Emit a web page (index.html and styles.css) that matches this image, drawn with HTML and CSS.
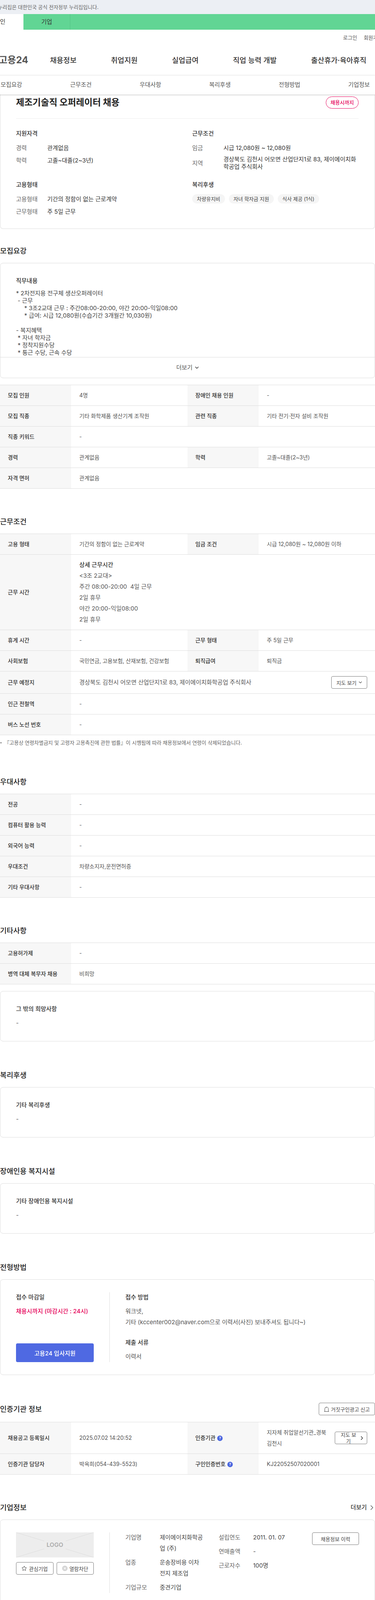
FILE: index.html
```html
<!DOCTYPE html>
<html lang="ko">
<head>
  <meta charset="UTF-8" />
  <title>제조기술직 오퍼레이터 채용 - 고용24</title>
  <link rel="stylesheet" href="styles.css">
</head>
<body>
  <div class="gov-bar">이 누리집은 대한민국 공식 전자정부 누리집입니다.</div>

  <div class="user-bar">
    <a class="user-tab active">개인</a>
    <a class="user-tab">기업</a>
  </div>

  <div class="util">
    <a>로그인</a>
    <a>회원가입</a>
  </div>

  <nav class="gnb">
    <div class="logo">고용24</div>
    <a>채용정보</a>
    <a>취업지원</a>
    <a>실업급여</a>
    <a>직업 능력 개발</a>
    <a>출산휴가·육아휴직</a>
  </nav>

  <div class="tabs">
    <a>모집요강</a>
    <a>근무조건</a>
    <a>우대사항</a>
    <a>복리후생</a>
    <a>전형방법</a>
    <a>기업정보</a>
  </div>

  <section class="card summary">
    <div class="summary-head">
      <h1>제조기술직 오퍼레이터 채용</h1>
      <span class="pill">채용시까지</span>
    </div>
    <div class="summary-grid">
      <div class="summary-col">
        <h3>지원자격</h3>
        <dl class="summary-row"><dt>경력</dt><dd>관계없음</dd></dl>
        <dl class="summary-row"><dt>학력</dt><dd>고졸~대졸(2~3년)</dd></dl>
      </div>
      <div class="summary-col">
        <h3>근무조건</h3>
        <dl class="summary-row"><dt>임금</dt><dd>시급 12,080원 ~ 12,080원</dd></dl>
        <dl class="summary-row multi"><dt>지역</dt><dd>경상북도 김천시 어모면 산업단지1로 83, 제이에이치화학공업 주식회사</dd></dl>
      </div>
      <div class="summary-col">
        <h3>고용형태</h3>
        <dl class="summary-row"><dt>고용형태</dt><dd>기간의 정함이 없는 근로계약</dd></dl>
        <dl class="summary-row"><dt>근무형태</dt><dd>주 5일 근무</dd></dl>
      </div>
      <div class="summary-col">
        <h3>복리후생</h3>
        <div class="chips">
          <span>차량유지비</span>
          <span>자녀 학자금 지원</span>
          <span>식사 제공 (1식)</span>
        </div>
      </div>
    </div>
  </section>

  <section class="section first">
    <h2>모집요강</h2>
    <div class="card job-card">
      <div class="job-body">
        <h4>직무내용</h4>
        <pre class="job-text">* 2차전지용 전구체 생산오퍼레이터
 - 근무
     * 3조2교대 근무 : 주간08:00-20:00, 야간 20:00-익일08:00
     * 급여: 시급 12,080원(수습기간 3개월간 10,030원)

- 복지혜택
 * 자녀 학자금
 * 정착지원수당
 * 통근 수당, 근속 수당</pre>
      </div>
      <div class="more">
        더보기
        <svg width="10" height="7" viewBox="0 0 10 7"><path d="M1 1l4 4 4-4" fill="none" stroke="#333" stroke-width="1.5"/></svg>
      </div>
    </div>

    <table class="info-table after-card">
      <colgroup><col class="c-th"><col class="c-td"><col class="c-th"><col class="c-td"></colgroup>
      <tr><th>모집 인원</th><td>4명</td><th>장애인 채용 인원</th><td>-</td></tr>
      <tr><th>모집 직종</th><td>기타 화학제품 생산기계 조작원</td><th>관련 직종</th><td>기타 전기·전자 설비 조작원</td></tr>
      <tr><th>직종 키워드</th><td colspan="3">-</td></tr>
      <tr><th>경력</th><td>관계없음</td><th>학력</th><td>고졸~대졸(2~3년)</td></tr>
      <tr><th>자격 면허</th><td colspan="3">관계없음</td></tr>
    </table>
  </section>

  <section class="section after-table">
    <h2>근무조건</h2>
    <table class="info-table">
      <colgroup><col class="c-th"><col class="c-td"><col class="c-th"><col class="c-td"></colgroup>
      <tr><th>고용 형태</th><td>기간의 정함이 없는 근로계약</td><th>임금 조건</th><td>시급 12,080원 ~ 12,080원 이하</td></tr>
      <tr>
        <th>근무 시간</th>
        <td colspan="3" class="hours">
          <strong class="hours-title">상세 근무시간</strong><br>
          &lt;3조 2교대&gt;<br>
          주간 08:00-20:00&nbsp; 4일 근무<br>
          2일 휴무<br>
          야간 20:00-익일08:00<br>
          2일 휴무
        </td>
      </tr>
      <tr><th>휴게 시간</th><td>-</td><th>근무 형태</th><td>주 5일 근무</td></tr>
      <tr><th>사회보험</th><td>국민연금, 고용보험, 산재보험, 건강보험</td><th>퇴직급여</th><td>퇴직금</td></tr>
      <tr>
        <th>근무 예정지</th>
        <td colspan="3">
          <div class="place">
            <span class="place-text">경상북도 김천시 어모면 산업단지1로 83, 제이에이치화학공업 주식회사</span>
            <button class="btn map-btn">지도 보기
              <svg width="9" height="6" viewBox="0 0 9 6"><path d="M1 1l3.5 3.5L8 1" fill="none" stroke="#444" stroke-width="1.1"/></svg>
            </button>
          </div>
        </td>
      </tr>
      <tr><th>인근 전철역</th><td colspan="3">-</td></tr>
      <tr><th>버스 노선 번호</th><td colspan="3">-</td></tr>
    </table>
    <p class="note">『고용상 연령차별금지 및 고령자 고용촉진에 관한 법률』이 시행됨에 따라 채용정보에서 연령이 삭제되었습니다.</p>
  </section>

  <section class="section">
    <h2>우대사항</h2>
    <table class="info-table">
      <colgroup><col class="c-th"><col class="c-td"><col class="c-th"><col class="c-td"></colgroup>
      <tr><th>전공</th><td colspan="3">-</td></tr>
      <tr><th>컴퓨터 활용 능력</th><td colspan="3">-</td></tr>
      <tr><th>외국어 능력</th><td colspan="3">-</td></tr>
      <tr><th>우대조건</th><td colspan="3">차량소지자,운전면허증</td></tr>
      <tr><th>기타 우대사항</th><td colspan="3">-</td></tr>
    </table>
  </section>

  <section class="section after-table">
    <h2>기타사항</h2>
    <table class="info-table">
      <colgroup><col class="c-th"><col class="c-td"><col class="c-th"><col class="c-td"></colgroup>
      <tr><th>고용허가제</th><td colspan="3">-</td></tr>
      <tr><th>병역 대체 복무자 채용</th><td colspan="3">비희망</td></tr>
    </table>
    <div class="card simple-card after-card">
      <h4>그 밖의 희망사항</h4>
      <p>-</p>
    </div>
  </section>

  <section class="section">
    <h2>복리후생</h2>
    <div class="card simple-card">
      <h4>기타 복리후생</h4>
      <p>-</p>
    </div>
  </section>

  <section class="section">
    <h2>장애인용 복지시설</h2>
    <div class="card simple-card">
      <h4>기타 장애인용 복지시설</h4>
      <p>-</p>
    </div>
  </section>

  <section class="section">
    <h2>전형방법</h2>
    <div class="card split-card">
      <div class="split-left">
        <h4>접수 마감일</h4>
        <p class="deadline">채용시까지 (마감시간 : 24시)</p>
        <button class="apply-btn">고용24 입사지원</button>
      </div>
      <div class="split-right">
        <h4>접수 방법</h4>
        <p>워크넷,<br>기타 (kccenter002@naver.com으로 이력서(사진) 보내주셔도 됩니다~)</p>
        <h4 class="docs-title">제출 서류</h4>
        <p>이력서</p>
      </div>
    </div>
  </section>

  <section class="section auth">
    <div class="section-head">
      <h2>인증기관 정보</h2>
      <button class="btn report-btn">
        <svg width="14" height="15" viewBox="0 0 14 15"><path d="M2.5 13.5V6.5a4.5 4.5 0 0 1 9 0v7M.8 13.5h12.4M5 4.6a2.5 2.5 0 0 1 2-1.2" fill="none" stroke="#444" stroke-width="1"/></svg>
        거짓구인광고 신고
      </button>
    </div>
    <table class="info-table">
      <colgroup><col class="c-th"><col class="c-td"><col class="c-th"><col class="c-td"></colgroup>
      <tr>
        <th>채용공고 등록일시</th>
        <td>2025.07.02 14:20:52</td>
        <th>인증기관 <span class="help">?</span></th>
        <td>
          <div class="agency">
            <span class="agency-name">지자체 취업알선기관_경북 김천시</span>
            <button class="btn agency-btn">
              <span class="agency-label">지도 보기</span>
              <svg width="7" height="11" viewBox="0 0 7 11"><path d="M1.2 1l4 4.5-4 4.5" fill="none" stroke="#333" stroke-width="1.5"/></svg>
            </button>
          </div>
        </td>
      </tr>
      <tr><th>인증기관 담당자</th><td>박옥희(054-439-5523)</td><th>구인인증번호 <span class="help">?</span></th><td>KJ22052507020001</td></tr>
    </table>
  </section>

  <section class="section after-table">
    <div class="section-head company-head">
      <h2>기업정보</h2>
      <a class="more-link">더보기
        <svg width="8" height="13" viewBox="0 0 8 13"><path d="M1 1l5.5 5.5L1 12" fill="none" stroke="#444" stroke-width="1.2"/></svg>
      </a>
    </div>
    <div class="card split-card company-card">
      <div class="split-left">
        <div class="logo-box">
          <svg viewBox="0 0 199 64" width="199" height="64"><path d="M0 0l72 22M199 0l-72 22M0 64l72-22M199 64l-72-22" stroke="#dcdcdc" fill="none"/></svg>
          <span>LOGO</span>
        </div>
        <div class="company-btns">
          <button class="btn">
            <svg width="14" height="14" viewBox="0 0 14 14"><path d="M7 1l1.8 3.9 4.2.5-3.1 2.9.8 4.2L7 10.5l-3.7 2 .8-4.2L1 5.4l4.2-.5z" fill="none" stroke="#444" stroke-width="1"/></svg>
            관심기업
          </button>
          <button class="btn">
            <svg width="14" height="14" viewBox="0 0 14 14"><circle cx="7" cy="7" r="7" fill="#d5d5d5"/><path d="M4.5 4.5l5 5M9.5 4.5l-5 5" stroke="#fff" stroke-width="1.3"/></svg>
            열람차단
          </button>
        </div>
      </div>
      <div class="company-info">
        <dl class="company-col first-col">
          <div><dt>기업명</dt><dd>제이에이치화학공업 (주)</dd></div>
          <div><dt>업종</dt><dd>운송장비용 이차전지 제조업</dd></div>
          <div><dt>기업규모</dt><dd>중견기업</dd></div>
        </dl>
        <dl class="company-col">
          <div><dt>설립연도</dt><dd>2011. 01. 07</dd></div>
          <div><dt>연매출액</dt><dd>-</dd></div>
          <div><dt>근로자수</dt><dd>100명</dd></div>
        </dl>
        <button class="btn history-btn">채용정보 이력</button>
      </div>
    </div>
  </section>
</body>
</html>
```

FILE: styles.css
```css
* {
  box-sizing: border-box;
}

html, body {
  margin: 0;
  padding: 0;
}

body {
  width: 960px;
  height: 4110px;
  overflow: hidden;
  background: #fff;
  color: #444;
  font-family: "Inter", "Noto Sans CJK KR", sans-serif;
  font-size: 14px;
  line-height: 28px;
}

a {
  color: inherit;
  text-decoration: none;
}

h1, h2, h3, h4, p, dl, dd, pre {
  margin: 0;
}

button {
  font-family: inherit;
  cursor: pointer;
}

/* top bars */
.gov-bar {
  height: 36px;
  margin-left: -21px;
  background: #eceff4;
  color: #666;
  font-size: 13px;
  line-height: 36px;
}

.user-bar {
  display: flex;
  height: 40px;
  background: #61d594;
  margin-left: -60px;
  line-height: 40px;
}

.user-tab {
  width: 120px;
  text-align: center;
  font-size: 15px;
  color: #333;
  border-right: 1px solid #55c585;
}

.user-tab.active {
  background: #fff;
  border-right: 0;
}

.util {
  display: flex;
  justify-content: flex-end;
  gap: 17px;
  height: 40px;
  line-height: 40px;
  margin-right: -19px;
  font-size: 13px;
  color: #555;
}

.gnb {
  display: flex;
  align-items: center;
  gap: 88px;
  height: 77px;
  margin-left: -3px;
  border-bottom: 1px solid #eee;
  font-size: 18.5px;
  font-weight: 500;
  color: #333;
  white-space: nowrap;
}

.logo {
  width: 43px;
  flex: none;
  font-size: 24px;
  font-weight: 700;
  color: #555;
}

.tabs {
  position: relative;
  display: grid;
  grid-template-columns: repeat(6, 178px);
  height: 49px;
  margin-left: -60px;
  line-height: 48px;
  text-align: center;
  font-size: 15px;
  color: #555;
  background: #fff;
  box-shadow: 0 1px 3px rgba(0, 0, 0, .25);
}

/* cards */
.card {
  border: 1px solid #ddd;
  border-radius: 8px;
  background: #fff;
}

.summary {
  height: 344px;
  border-top: 0;
  border-radius: 0 0 8px 8px;
  padding: 5px 41px 0 40px;
}

.summary-head {
  display: flex;
  justify-content: space-between;
  align-items: center;
  height: 57px;
  padding-bottom: 26px;
  border-bottom: 1px solid #eee;
}

.summary-head h1 {
  font-size: 23px;
  font-weight: 700;
  line-height: 31px;
  color: #222;
}

.pill {
  width: 84px;
  height: 31px;
  border: 1px solid #e6005a;
  border-radius: 16px;
  color: #e6005a;
  font-size: 13px;
  font-weight: 500;
  line-height: 29px;
  text-align: center;
}

.summary-grid {
  display: grid;
  grid-template-columns: 451px 1fr;
  row-gap: 27px;
  padding-top: 28px;
}

.summary-col h3 {
  font-size: 15px;
  font-weight: 500;
  line-height: 20px;
  color: #333;
  margin-bottom: 14px;
}

.summary-row {
  display: flex;
  align-items: center;
  min-height: 24px;
  margin-bottom: 8px;
  font-size: 15px;
  line-height: 19px;
}

.summary-row:last-child {
  margin-bottom: 0;
}

.summary-row dt {
  width: 80px;
  flex: none;
  color: #666;
}

.summary-row dd {
  color: #333;
}

.chips {
  display: flex;
  gap: 10px;
}

.chips span {
  height: 24px;
  padding: 0 12px;
  background: #f5f5f5;
  border-radius: 12px;
  font-size: 13px;
  line-height: 24px;
  color: #444;
}

/* sections */
.section {
  margin-top: 74px;
}

.section.first {
  margin-top: 44px;
}

.section.after-table {
  margin-top: 72px;
}

.section.auth {
  margin-top: 71px;
}

.section h2 {
  font-size: 18.5px;
  font-weight: 500;
  line-height: 24px;
  color: #222;
  margin-bottom: 19px;
}

.section-head {
  display: flex;
  justify-content: space-between;
  align-items: center;
  height: 32px;
  margin-bottom: 17px;
}

.section-head h2 {
  margin-bottom: 0;
}

.company-head {
  height: 24px;
  margin-bottom: 19px;
}

.job-body {
  height: 240px;
  padding: 32px 40px 0;
  overflow: hidden;
}

.card h4 {
  font-size: 15px;
  font-weight: 500;
  line-height: 26px;
  color: #333;
  margin-bottom: 9px;
}

.job-text {
  font-family: inherit;
  font-size: 15px;
  line-height: 19px;
  color: #444;
  white-space: pre-wrap;
}

.more {
  display: flex;
  align-items: center;
  justify-content: center;
  gap: 6px;
  height: 53px;
  border-top: 1px solid #ddd;
  font-size: 15px;
  color: #555;
}

.after-card {
  margin-top: 17px;
}

/* tables */
.info-table {
  width: 960px;
  table-layout: fixed;
  border-collapse: collapse;
  border-top: 1px solid #ddd;
}

.c-th {
  width: 182px;
}

.c-td {
  width: 298px;
}

.info-table tr {
  border-bottom: 1px solid #ddd;
}

.info-table th {
  padding: 12px 10px 12px 20px;
  background: #f7f7f7;
  font-size: 14px;
  font-weight: 500;
  text-align: left;
  color: #333;
}

.info-table td {
  padding: 12px 20px 12px 21px;
  font-size: 14px;
  color: #555;
}

.info-table td.hours {
  font-size: 15px;
}

.hours-title {
  font-weight: 500;
  color: #333;
}

.place, .agency {
  display: flex;
  align-items: center;
  justify-content: space-between;
}

.place-text {
  font-size: 15px;
}

.btn {
  display: inline-flex;
  align-items: center;
  justify-content: center;
  gap: 5px;
  height: 32px;
  padding: 0;
  background: #fff;
  border: 1px solid #777;
  border-radius: 4px;
  font-size: 13px;
  color: #444;
}

.map-btn {
  width: 92px;
  flex: none;
}

.agency-name {
  width: 168px;
}

.agency-btn {
  width: 83px;
  flex: none;
  gap: 6px;
  overflow: hidden;
}

.agency-label {
  width: 50px;
  font-size: 13px;
  line-height: 16px;
}

.report-btn {
  width: 144px;
  gap: 4px;
}

.help {
  display: inline-block;
  width: 14px;
  height: 14px;
  margin-left: 1px;
  border-radius: 50%;
  background: #4b67e0;
  color: #fff;
  font-size: 9px;
  font-weight: 700;
  line-height: 14px;
  text-align: center;
  vertical-align: 1px;
}

.note {
  position: relative;
  margin-top: 9px;
  padding: 0 0 4px 11px;
  font-size: 13px;
  line-height: 20px;
  color: #666;
}

.note::before {
  content: "";
  position: absolute;
  left: 1px;
  top: 9px;
  width: 3px;
  height: 3px;
  border-radius: 50%;
  background: #666;
}

.simple-card {
  padding: 32px 40px;
}

.simple-card p {
  font-size: 15px;
  color: #555;
}

/* apply + company */
.split-card {
  display: flex;
  padding: 32px 0;
}

.split-left {
  display: flex;
  flex-direction: column;
  width: 280px;
  flex: none;
  padding: 0 40px;
  border-right: 1px solid #ddd;
}

.split-right {
  padding-left: 40px;
}

.split-right p {
  font-size: 15px;
  color: #555;
}

.deadline {
  font-size: 15px;
  font-weight: 500;
  color: #e6005a;
}

.apply-btn {
  height: 48px;
  margin-top: auto;
  border: 0;
  border-radius: 4px;
  background: #4f69e2;
  color: #fff;
  font-size: 15px;
  font-weight: 500;
}

.docs-title {
  margin-top: 25px;
}

.more-link {
  display: flex;
  align-items: center;
  gap: 9px;
  margin-right: 4px;
  font-size: 15px;
  font-weight: 500;
  color: #333;
}

.logo-box {
  position: relative;
  display: flex;
  align-items: center;
  justify-content: center;
  height: 64px;
  background: #ededed;
}

.logo-box svg {
  position: absolute;
  left: 0;
  top: 0;
}

.logo-box span {
  position: relative;
  font-size: 15px;
  font-weight: 600;
  color: #aaa;
}

.company-btns {
  display: flex;
  gap: 8px;
  margin-top: 12px;
}

.company-btns .btn {
  flex: 1;
}

.company-info {
  display: flex;
  align-items: flex-start;
  padding-left: 40px;
}

.company-col {
  width: 239px;
  flex: none;
  font-size: 15px;
  margin-top: -1px;
}

.company-col > div {
  display: flex;
  margin-bottom: 8px;
}

.company-col > div:last-child {
  margin-bottom: 0;
}

.company-col dt {
  width: 88px;
  flex: none;
  color: #666;
}

.company-col dd {
  color: #444;
}

.first-col dd {
  width: 112px;
}

.history-btn {
  width: 120px;
}
```
